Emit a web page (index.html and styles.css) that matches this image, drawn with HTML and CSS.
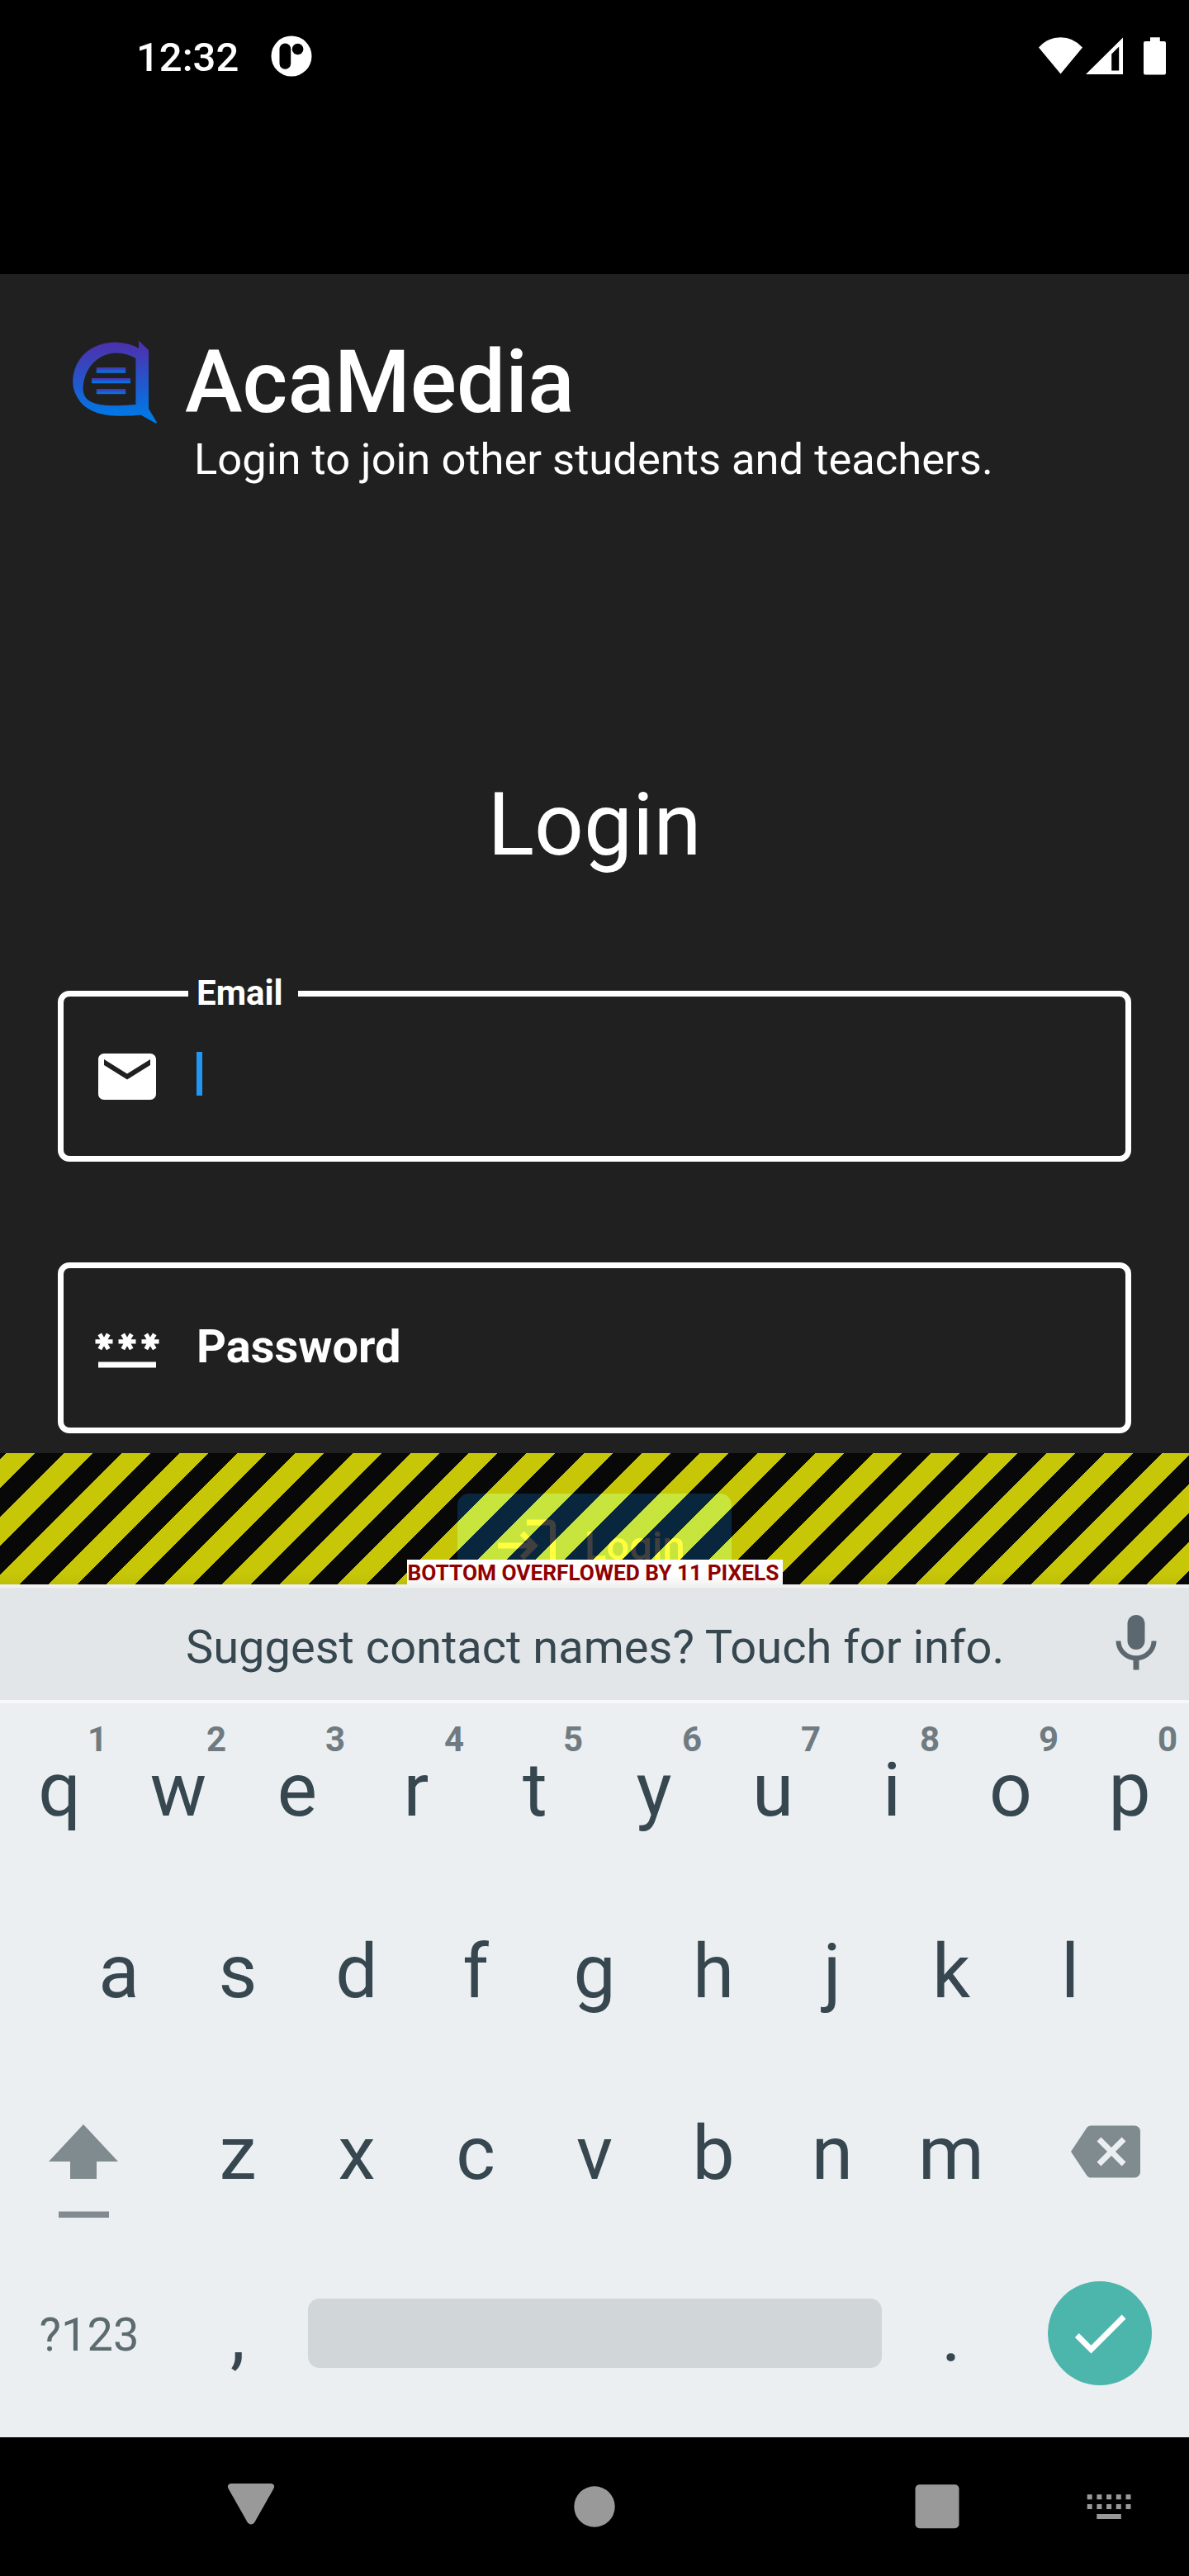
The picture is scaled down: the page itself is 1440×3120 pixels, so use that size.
FILE: index.html
```html
<!DOCTYPE html>
<html lang="en">
<head>
<meta charset="utf-8">
<title>AcaMedia</title>
<link rel="stylesheet" href="styles.css">
</head>
<body>
<header class="status">
  <span class="clock">12:32</span>
  <svg class="notif" viewBox="0 0 50 50"><circle cx="25" cy="25" r="24.5" fill="#fff"/><rect x="10.5" y="9.5" width="13.7" height="31.3" rx="6.85"/><circle cx="32.6" cy="16.5" r="6.8"/></svg>
  <svg class="indicators" viewBox="-2 0 156 48" fill="#fff"><path d="M0 12.5Q11 .2 26.500 .2T53 12.500L26.500 44.500Z"/><path fill-rule="evenodd" d="M102 .5V45H57ZM97.200 11.500L88.200 20.500V40.500H97.200Z"/><path d="M135 .2h11.800v4.800h5.200q2 0 2 2v36.500q0 2-2 2h-23q-2 0-2-2V7q0-2 2-2h6z"/></svg>
</header>
<main class="app">
  <div class="brand">
    <svg class="logo" viewBox="0 0 104 102">
      <defs><linearGradient id="g" x1="0" y1="0" x2="0" y2="1"><stop offset="0" stop-color="#502dab"/><stop offset=".9" stop-color="#0078e6"/></linearGradient></defs>
      <path fill="url(#g)" fill-rule="evenodd" d="M80 .5L92 12V83L102 99.500L101 101L82.500 90.500Q70 92 54 91.700C30 91 14 84 6 70Q0 60 .2 50C1 22 22 2.500 52 2.500Q69 3 80 10ZM76.400 22Q66 15.500 53 15.500C30 16 13 34 12.500 60C14 75 27 79.500 54 79.200Q66 79 76.400 78Z"/>
      <g fill="url(#g)"><rect x="28.800" y="33" width="35.400" height="6.700"/><rect x="23" y="46" width="47" height="6.200"/><rect x="28.800" y="59" width="35.400" height="6.200"/></g>
    </svg>
    <div class="brand-text"><h1>AcaMedia</h1><p>Login to join other students and teachers.</p></div>
  </div>
  <h2>Login</h2>
  <div class="field email">
    <span class="label">Email</span>
    <svg class="icon" viewBox="0 0 24 24"><path d="M20 4H4c-1.100 0-1.990.9-1.990 2L2 18c0 1.100.9 2 2 2h16c1.100 0 2-.9 2-2V6c0-1.100-.9-2-2-2zm0 4l-8 5-8-5V6l8 5 8-5v2z"/></svg>
    <span class="caret"></span>
  </div>
  <div class="field password">
    <svg class="icon" viewBox="0 0 24 24"><path d="M2 17h20v2H2zM3.150 12.950L4 11.470l.85 1.480 1.300-.75-.85-1.480H7v-1.500H5.300l.85-1.470L4.850 7 4 8.470 3.150 7l-1.300.75.85 1.470H1v1.500h1.700l-.85 1.480zM9.850 12.200l1.300.75.85-1.480.85 1.480 1.300-.75-.85-1.480H15v-1.500h-1.700l.85-1.470L12.850 7 12 8.470 11.150 7l-1.300.75.85 1.470H9v1.500h1.700zM23 9.220h-1.700l.85-1.470L20.850 7 20 8.470 19.150 7l-1.300.75.85 1.470H17v1.500h1.700l-.85 1.480 1.300.75.85-1.480.85 1.480 1.300-.75-.85-1.480H23z"/></svg>
    <span class="placeholder">Password</span>
  </div>
  <div class="login-button">
    <svg class="icon" viewBox="0 0 24 24"><path d="M11 7L9.600 8.400l2.600 2.600H2v2h10.200l-2.600 2.600L11 17l5-5zM20 19h-8v2h8c1.100 0 2-.9 2-2V5c0-1.100-.9-2-2-2h-8v2h8z"/></svg>
    <span>Login</span>
  </div>
  <div class="overflow-stripes"><span>BOTTOM OVERFLOWED BY 11 PIXELS</span></div>
</main>
<section class="keyboard">
  <div class="suggest"><span>Suggest contact names? Touch for info.</span>
    <svg viewBox="0 0 24 24"><path d="M12 14c1.660 0 2.990-1.340 2.990-3L15 5c0-1.660-1.340-3-3-3S9 3.340 9 5v6c0 1.660 1.340 3 3 3zm5.300-3c0 3-2.540 5.100-5.300 5.100S6.700 14 6.700 11H5c0 3.410 2.720 6.230 6 6.720V21h2v-3.280c3.280-.48 6-3.300 6-6.720h-1.700z"/></svg>
  </div>
  <div class="row"><b>q<i>1</i></b><b>w<i>2</i></b><b>e<i>3</i></b><b>r<i>4</i></b><b>t<i>5</i></b><b>y<i>6</i></b><b>u<i>7</i></b><b>i<i>8</i></b><b>o<i>9</i></b><b>p<i>0</i></b></div>
  <div class="row tall"><b>a</b><b>s</b><b>d</b><b>f</b><b>g</b><b>h</b><b>j</b><b>k</b><b>l</b></div>
  <div class="row">
    <b class="wide shift"><svg viewBox="0 0 84 114"><path d="M42 0L84 45H58V66H26V45H0ZM12 105.500H73V113H12Z"/></svg></b>
    <b>z</b><b>x</b><b>c</b><b>v</b><b>b</b><b>n</b><b>m</b>
    <b class="wide back"><svg viewBox="0 0 24 24"><path d="M22 3H7c-.69 0-1.230.35-1.590.88L0 12l5.410 8.110c.36.53.9.89 1.590.89h15c1.100 0 2-.9 2-2V5c0-1.100-.9-2-2-2zm-3 12.590L17.590 17 14 13.410 10.410 17 9 15.590 12.590 12 9 8.410 10.410 7 14 10.590 17.590 7 19 8.410 15.410 12z"/></svg></b>
  </div>
  <div class="row tall">
    <b class="wide symbols">?123</b><b>,</b><b class="space"></b><b>.</b>
    <b class="wide"><span class="enter"><svg viewBox="0 0 24 24"><path d="M9 16.200L4.800 12l-1.400 1.400L9 19 21 7l-1.400-1.400z"/></svg></span></b>
  </div>
</section>
<nav class="navbar">
  <svg viewBox="0 0 1440 168" fill="#999"><path d="M279.500 56H328.500Q333.500 57 331.500 62L308 103.500Q304 107.500 300 103.500L276.500 62Q274.500 57 279.500 56Z"/><circle cx="720" cy="84" r="24.700"/><rect x="1108.500" y="57.200" width="53" height="53" rx="5"/><path d="M1316.700 69.300h6v6h-6zm11.700 0h6v6h-6zm11.700 0h6v6h-6zm11.700 0h6v6h-6zm11.700 0h6v6h-6zM1316.700 81h6v6h-6zm11.700 0h6v6h-6zm11.700 0h6v6h-6zm11.700 0h6v6h-6zm11.700 0h6v6h-6zM1328.300 93h29.500v6h-29.500z"/></svg>
</nav>
</body>
</html>
```

FILE: styles.css
```css
* { box-sizing: border-box; }
body { margin: 0; width: 1440px; font-family: Roboto, "Liberation Sans", sans-serif; background: #000; color: #fff; }
svg { display: block; flex: none; }
h1, h2, p { margin: 0; white-space: nowrap; }

.status { height: 332px; display: flex; align-items: flex-start; padding: 43px 28px 0 165px; }
.clock { width: 163px; font-size: 49px; line-height: 54px; font-weight: 500; }
.notif { width: 50px; height: 50px; }
.indicators { width: 156px; height: 48px; margin: 2px 0 0 auto; }

.app { position: relative; height: 1587px; overflow: hidden; background: #202020; padding: 70px 70px 0; }
.brand { display: flex; height: 536px; padding-left: 18px; }
.logo { width: 104px; height: 102px; margin-top: 10px; }
.brand-text { margin-left: 32px; }
h1 { font-size: 105px; line-height: 124px; font-weight: 500; }
.brand-text p { font-size: 52.5px; line-height: 60px; padding-left: 11px; }
h2 { font-size: 105px; line-height: 124px; font-weight: 400; text-align: center; }

.field { position: relative; height: 207px; border: 7px solid #fff; border-radius: 14px; display: flex; align-items: center; padding-left: 35px; }
.email { margin-top: 138px; }
.password { margin-top: 122px; }
.icon { width: 84px; height: 84px; fill: #fff; }
.label { position: absolute; left: 151px; top: -28px; width: 133px; padding-left: 10px; background: #202020; font-size: 42px; line-height: 48px; font-weight: 700; }
.caret { width: 7px; height: 53px; margin: 0 0 7px 42px; background: #2196f3; }
.placeholder { margin-left: 42px; font-size: 56px; line-height: 66px; font-weight: 700; }
.password .icon { margin-bottom: 1px; }
.password .placeholder { margin-bottom: 3px; }

.login-button { width: 332px; height: 126px; margin: 73px auto 0; border-radius: 14px; background: #2196f3; display: flex; align-items: center; padding-left: 42px; font-size: 49px; font-weight: 500; }
.login-button span { margin-left: 28px; }
.overflow-stripes { position: absolute; left: 0; right: 0; top: 1428px; bottom: 0; display: flex; justify-content: center; align-items: flex-end;
  background: linear-gradient(transparent 146px, rgba(0,0,0,.05)), repeating-linear-gradient(135deg, rgba(0,0,0,.75) 0 5.3px, rgba(255,255,0,.75) 5.3px 30.05px, rgba(0,0,0,.75) 30.05px 49.497px); }
.overflow-stripes span { width: 455px; height: 30px; padding-left: 1px; white-space: nowrap; background: linear-gradient(#fff 60%, #f3f3f3); color: #900000; font-size: 26.25px; line-height: 32px; font-weight: 700; }

.keyboard { height: 1033px; background: #ebeff2; color: #37474f; }
.suggest { height: 144px; border-top: 4px solid #f0f1f2; border-bottom: 4px solid #f7f8fa; background: #e2e6e9; display: flex; align-items: center; font-size: 56px; padding: 0 22px 0 225px; justify-content: space-between; white-space: nowrap; }
.suggest span { line-height: 66px; margin-bottom: -8px; }
.suggest svg { width: 84px; height: 84px; fill: #5c686f; }
.row { height: 210px; display: flex; justify-content: center; }
.row.tall { height: 230px; }
.row b { position: relative; width: 144px; display: flex; align-items: center; justify-content: center; font-size: 91px; font-weight: 400; }
.row i { position: absolute; right: 14px; top: 20px; font-size: 42px; line-height: 48px; font-style: normal; font-weight: 700; color: #6f7b80; }
.row .wide { width: 216px; }
.shift svg { width: 84px; height: 114px; margin: 44px 14px 0 0; fill: #808b8f; }
.back svg { width: 84px; height: 84px; margin: -5px 0 0 14px; fill: #808b8f; }
.row .symbols { font-size: 56px; color: #5c6b70; }
.row .space { width: 695px; height: 84px; margin: 71px 12px 0 13px; border-radius: 14px; background: #d1d6d9; }
.enter { width: 126px; height: 126px; margin-bottom: 4px; border-radius: 50%; background: #4db6ac; display: flex; align-items: center; justify-content: center; }
.enter svg { width: 84px; height: 84px; fill: #fff; }
.navbar { height: 168px; background: #000; }
.navbar svg { width: 1440px; height: 168px; }
```
